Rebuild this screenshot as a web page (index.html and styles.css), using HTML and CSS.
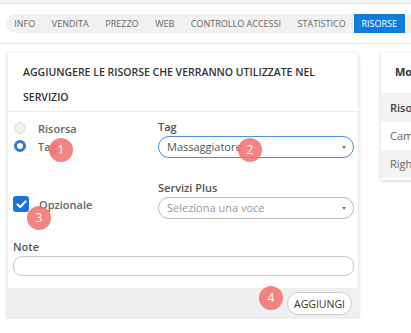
FILE: index.html
```html
<!DOCTYPE html>
<html>
<head>
    <title>Risorse</title>
    <link rel="stylesheet" href="styles.css">
</head>
<body>
    <div class="topline"></div>

    <!-- Tabs -->
    <div class="tabbar">
        <ul class="tabs">
            <li>INFO</li>
            <li>VENDITA</li>
            <li>PREZZO</li>
            <li>WEB</li>
            <li>CONTROLLO ACCESSI</li>
            <li>STATISTICO</li>
            <li class="active">RISORSE</li>
        </ul>
    </div>

    <div class="content">
        <!-- Add resource card -->
        <div class="card">
            <div class="card-head">AGGIUNGERE LE RISORSE CHE VERRANNO UTILIZZATE NEL SERVIZIO</div>
            <div class="card-body">
                <div class="row">
                    <div class="col-left">
                        <label class="radio"><span class="dot"></span>Risorsa</label>
                        <label class="radio checked"><span class="dot"></span>Tag<span class="badge b1">1</span></label>
                    </div>
                    <div class="col-right">
                        <div class="field-label">Tag</div>
                        <div class="select focus">Massaggiatore<span class="caret"></span><span class="badge b2">2</span></div>
                    </div>
                </div>
                <div class="row row2">
                    <div class="col-left">
                        <label class="check"><span class="box">
                            <svg width="11" height="9" viewBox="0 0 11 9"><path d="M1.5 4.5 L4.2 7 L9.5 1.5" fill="none" stroke="#fff" stroke-width="2.2" stroke-linecap="round" stroke-linejoin="round"/></svg>
                        </span>Opzionale<span class="badge b3">3</span></label>
                    </div>
                    <div class="col-right">
                        <div class="field-label">Servizi Plus</div>
                        <div class="select placeholder">Seleziona una voce<span class="caret"></span></div>
                    </div>
                </div>
                <div class="field-label note-label">Note</div>
                <div class="input"></div>
            </div>
            <div class="card-foot">
                <span class="badge b4">4</span>
                <button>AGGIUNGI</button>
            </div>
        </div>

        <!-- Side table -->
        <div class="side">
            <div class="side-head">Mo</div>
            <div class="side-row grey bold">Riso</div>
            <div class="side-row">Cam</div>
            <div class="side-row grey">Righ</div>
        </div>
    </div>
</body>
</html>
```

FILE: styles.css
```css
body {
    margin: 0;
    background-color: #fff;
    font-family: "Open Sans", Arial, sans-serif;
    color: #555;
    overflow: hidden;
}

.topline {
    height: 3px;
    background-color: #f2f2f2;
    border-bottom: 1px solid #e4e4e4;
}

.tabbar {
    padding: 10px 0 10px 6px;
    border-bottom: 1px solid #e9e9e9;
}

.tabs {
    display: flex;
    margin: 0;
    padding: 0;
    list-style: none;
    background-color: #f1f1f1;
    border-radius: 10px 0 0 10px;
    height: 19px;
    white-space: nowrap;
}

.tabs li {
    padding: 0 8.3px;
    font-size: 9px;
    line-height: 19px;
    color: #666;
}

.tabs li.active {
    background-color: #0f7ddd;
    color: #fff;
    padding: 0 7.5px;
}

.content {
    display: flex;
    gap: 23px;
    padding: 9px 0 0 8px;
}

.card {
    flex: 0 0 350px;
    background-color: #fff;
    box-shadow: 0 1px 4px rgba(0, 0, 0, 0.18);
}

.card-head {
    padding: 7px 12px 0 15px;
    font-size: 10.5px;
    font-weight: 600;
    color: #333;
    line-height: 25px;
    height: 51px;
    border-bottom: 1px solid #eee;
}

.card-body {
    padding: 7px 4px 12px 5px;
}

.row {
    display: flex;
}

.row2 {
    margin-top: 23px;
}

.col-left {
    width: 145px;
}

.col-right {
    flex: 1;
}

.col-right:first-child {
    padding-top: 1px;
}

.radio {
    position: relative;
    display: flex;
    align-items: center;
    height: 18px;
    font-size: 11px;
    font-weight: 600;
    color: #666;
}

.dot {
    width: 12px;
    height: 12px;
    margin: 0 12px 0 1px;
    border-radius: 50%;
    background-color: #f0f0f0;
    border: 1px solid #ddd;
    box-sizing: border-box;
}

.radio.checked .dot {
    background-color: #fff;
    border: 3.5px solid #2f7ac9;
}

.field-label {
    font-size: 11px;
    font-weight: 600;
    color: #555;
    line-height: 14px;
    margin-bottom: 2px;
}

.row:first-child .field-label {
    margin-top: 1px;
}

.note-label {
    margin-top: 21px;
}

.select {
    position: relative;
    height: 22px;
    box-sizing: border-box;
    border: 1px solid #bbb;
    border-radius: 11px;
    padding: 0 8px;
    font-size: 11px;
    line-height: 20px;
    color: #555;
}

.select.focus {
    border-color: #4a90e2;
}

.select.placeholder {
    color: #999;
}

.caret {
    position: absolute;
    right: 7px;
    top: 9px;
    border-left: 2.5px solid transparent;
    border-right: 2.5px solid transparent;
    border-top: 3px solid #777;
}

.check {
    position: relative;
    display: flex;
    align-items: center;
    margin-top: 15px;
    font-size: 11px;
    font-weight: 600;
    color: #666;
}

.box {
    display: flex;
    align-items: center;
    justify-content: center;
    width: 16px;
    height: 16px;
    margin-right: 10px;
    border-radius: 3px;
    background-color: #1a73d9;
}

.input {
    height: 18px;
    border: 1px solid #c8c8c8;
    border-radius: 9px;
}

.card-foot {
    display: flex;
    justify-content: flex-end;
    align-items: center;
    gap: 4px;
    height: 31px;
    padding-right: 6px;
    background-color: #efefef;
}

button {
    font-family: "Open Sans", Arial, sans-serif;
    font-size: 10.5px;
    color: #333;
    background-color: #fff;
    border: 1px solid #ccc;
    border-radius: 12px;
    height: 23px;
    padding: 0 6px;
}

.badge {
    position: absolute;
    width: 24px;
    height: 24px;
    border-radius: 50%;
    background-color: rgba(240, 110, 110, 0.85);
    color: #fff;
    font-size: 12px;
    line-height: 24px;
    text-align: center;
    font-weight: 400;
}

.b1 { left: 36px; top: 1px; }
.b2 { left: 79px; top: 1px; }
.b3 { left: 14px; top: 10px; }

.card-foot .badge {
    position: static;
    align-self: flex-start;
    margin-top: -2px;
}

.side {
    flex: 0 0 60px;
    box-shadow: 0 1px 4px rgba(0, 0, 0, 0.18);
    font-size: 11px;
    height: 127px;
}

.side-head {
    height: 40px;
    line-height: 38px;
    padding-left: 14px;
    font-weight: 700;
    color: #333;
    border-bottom: 1px solid #eee;
}

.side-row {
    height: 28px;
    line-height: 28px;
    padding-left: 9px;
    color: #666;
}

.side-row.grey {
    background-color: #f3f3f3;
}

.side-row.bold {
    font-weight: 600;
    color: #444;
}
```
